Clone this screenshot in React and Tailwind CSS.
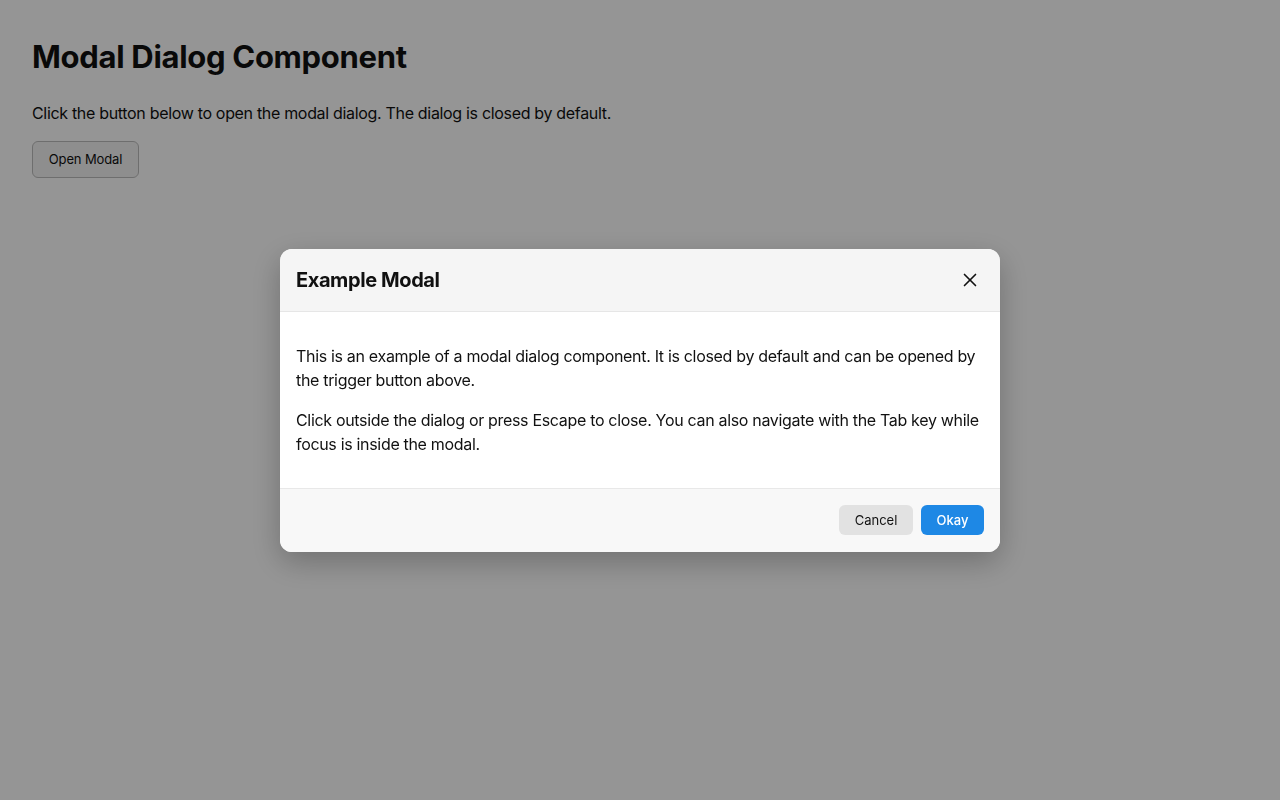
import { X } from 'lucide-react';

const App = () => {
  return (
    <div className="min-h-screen bg-white text-[#111] font-['Inter',_'Liberation_Sans',_sans-serif]">
      <main className="px-8 pt-[37px]">
        <h1 className="text-[31px] font-bold leading-[40px] tracking-[-0.01em]">Modal Dialog Component</h1>
        <p className="mt-[24px] text-[16px] leading-[24px] tracking-[-0.02em]">
          Click the button below to open the modal dialog. The dialog is closed by default.
        </p>
        <button className="mt-[16px] h-[37px] w-[107px] rounded-[6px] border border-[#bdbdbd] bg-[#f4f4f4] text-[13px] tracking-[-0.01em] text-[#111]">
          Open Modal
        </button>
      </main>

      {/* overlay */}
      <div className="fixed inset-0 flex items-center justify-center bg-[rgba(0,0,0,0.415)]">
        <div className="w-[720px] overflow-hidden rounded-[12px] bg-white shadow-[0_10px_30px_rgba(0,0,0,0.25)]">
          <div className="flex h-[63px] items-center justify-between border-b border-[#e6e6e6] bg-[#f5f5f5] px-4">
            <h2 className="text-[20px] font-bold tracking-[-0.02em] text-[#111]">Example Modal</h2>
            <button className="flex h-[28px] w-[28px] items-center justify-center text-[#111]">
              <X size={22} strokeWidth={1.8} />
            </button>
          </div>
          <div className="px-4 py-8 text-[16px] leading-[24px] tracking-[-0.02em] text-[#111]">
            <p>
              This is an example of a modal dialog component. It is closed by default and can be opened by the trigger button above.
            </p>
            <p className="mt-4">
              Click outside the dialog or press Escape to close. You can also navigate with the Tab key while focus is inside the modal.
            </p>
          </div>
          <div className="flex h-[64px] items-center justify-end gap-2 border-t border-[#e8e8e8] bg-[#f8f8f8] px-4">
            <button className="h-[30px] w-[74px] rounded-[6px] bg-[#e2e2e2] pt-px text-[13px] text-[#111]">Cancel</button>
            <button className="h-[30px] w-[63px] rounded-[6px] bg-[#1e88e5] pt-px text-[13px] font-medium text-white">Okay</button>
          </div>
        </div>
      </div>
    </div>
  );
};

export default App;
